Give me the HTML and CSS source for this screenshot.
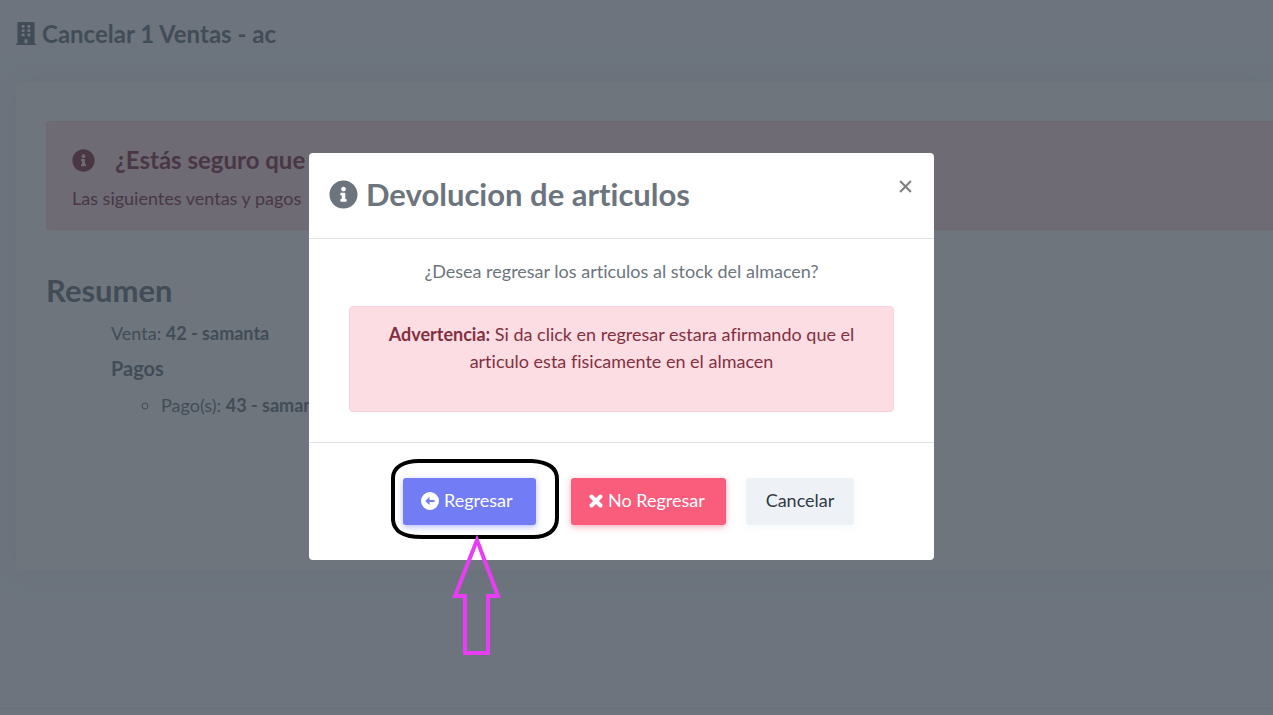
FILE: index.html
```html
<!DOCTYPE html>
<html lang="es">
<head>
<meta charset="utf-8">
<meta name="viewport" content="width=device-width, initial-scale=1">
<title>Cancelar Ventas</title>
<link rel="stylesheet" href="styles.css">
</head>
<body>
<svg class="sprite" aria-hidden="true">
  <symbol id="info" viewBox="0 0 512 512"><path d="M256 8C119 8 8 119 8 256s111 248 248 248 248-111 248-248S393 8 256 8zm0 110c23 0 42 19 42 42s-19 42-42 42-42-19-42-42 19-42 42-42zm56 254c0 7-5 12-12 12h-88c-7 0-12-5-12-12v-24c0-7 5-12 12-12h12v-64h-12c-7 0-12-5-12-12v-24c0-7 5-12 12-12h64c7 0 12 5 12 12v100h12c7 0 12 5 12 12v24z"/></symbol>
</svg>
<div class="page">
  <header class="page-head">
    <svg class="icon-building" viewBox="0 0 448 512" aria-hidden="true"><path fill-rule="evenodd" d="M436 480h-20V24c0-13-11-24-24-24H56C43 0 32 11 32 24v456H12c-7 0-12 5-12 12v20h448v-20c0-7-5-12-12-12zM128 76c0-7 5-12 12-12h40c7 0 12 5 12 12v40c0 7-5 12-12 12h-40c-7 0-12-5-12-12V76zm0 96c0-7 5-12 12-12h40c7 0 12 5 12 12v40c0 7-5 12-12 12h-40c-7 0-12-5-12-12v-40zm52 148h-40c-7 0-12-5-12-12v-40c0-7 5-12 12-12h40c7 0 12 5 12 12v40c0 7-5 12-12 12zm76 160h-64v-84c0-7 5-12 12-12h40c7 0 12 5 12 12v84zm64-172c0 7-5 12-12 12h-40c-7 0-12-5-12-12v-40c0-7 5-12 12-12h40c7 0 12 5 12 12v40zm0-96c0 7-5 12-12 12h-40c-7 0-12-5-12-12v-40c0-7 5-12 12-12h40c7 0 12 5 12 12v40zm0-96c0 7-5 12-12 12h-40c-7 0-12-5-12-12V76c0-7 5-12 12-12h40c7 0 12 5 12 12v40z"/></svg>
    <h1 class="page-title">Cancelar 1 Ventas - ac</h1>
  </header>
  <main class="card">
    <section class="notice">
      <h2 class="notice-title"><svg class="icon-notice" aria-hidden="true"><use href="#info"/></svg>¿Estás seguro que</h2>
      <p class="notice-text">Las siguientes ventas y pagos</p>
    </section>
    <h2 class="summary-title">Resumen</h2>
    <div class="summary">
      <p class="line">Venta: <strong>42 - samanta</strong></p>
      <h3 class="pay-title">Pagos</h3>
      <ul class="pay-list"><li>Pago(s): <strong>43 - samanta</strong></li></ul>
    </div>
  </main>
  <footer class="page-foot"></footer>
</div>
<div class="backdrop">
  <div class="modal" role="dialog" aria-modal="true" aria-labelledby="dialog-title">
    <div class="modal-head">
      <h2 class="modal-title" id="dialog-title"><svg class="icon-title" aria-hidden="true"><use href="#info"/></svg>Devolucion de articulos</h2>
      <button class="close" type="button" aria-label="Cerrar"><svg class="icon-close" viewBox="0 0 12 12" aria-hidden="true"><path d="M1 1l10 10M11 1L1 11"/></svg></button>
    </div>
    <div class="modal-body">
      <p class="question">¿Desea regresar los articulos al stock del almacen?</p>
      <div class="warning"><strong>Advertencia:</strong> Si da click en regresar estara afirmando que el articulo esta fisicamente en el almacen</div>
    </div>
    <div class="modal-foot">
      <div class="marked">
        <button class="btn btn-primary" type="button"><svg class="icon-back" viewBox="0 0 18 18" aria-hidden="true"><circle cx="9" cy="9" r="9" fill="#fff"/><path d="M8.500 4.800L4.300 9l4.200 4.200V10H13.500V8H8.500z" fill="#727cf5"/></svg>Regresar</button>
        <svg class="mark" viewBox="0 0 170 200" aria-hidden="true">
          <path d="M29 3H142C157 4 167 9 167 21V60C167 73 157 79 143 79H32C12 79 4 73 3 62V20C3 9 14 3 29 3Z" fill="none" stroke="#000" stroke-width="4"/>
          <path d="M87 82L65 138H75V195H98V138H108Z" fill="none" stroke="#e93df5" stroke-width="4"/>
        </svg>
      </div>
      <button class="btn btn-danger" type="button"><svg class="icon-times" viewBox="0 0 14 14" aria-hidden="true"><path d="M2.500 2.500l9 9M11.500 2.500l-9 9"/></svg>No Regresar</button>
      <button class="btn btn-light" type="button">Cancelar</button>
    </div>
  </div>
</div>
</body>
</html>
```

FILE: styles.css
```css
* { box-sizing: border-box; }
body {
  margin: 0;
  background: #fafbfe;
  color: #6c757d;
  font: 18px/27px Lato, "Open Sans", sans-serif;
  font-variant-ligatures: none;
}
h1, h2, h3, p, ul { margin: 0; }
svg { flex: none; fill: currentColor; }
.sprite { position: absolute; width: 0; height: 0; }

.page { display: flex; flex-direction: column; min-height: 100vh; overflow: hidden; }
.page-head { display: flex; align-items: center; gap: 6px; height: 82px; padding: 0 16px 15px; }
.icon-building { width: 20px; height: 23px; }
.page-title { font-size: 24px; line-height: 32px; }
.card {
  margin-left: 16px;
  padding: 39px 0 151px 30px;
  background: #fff;
  border-radius: 4px 0 0 4px;
  box-shadow: 0 0 35px rgba(154, 161, 171, 0.15);
}
.notice {
  padding: 23px 25px 17px;
  border: 1px solid #fccfda;
  border-right: 0;
  border-radius: 4px 0 0 4px;
  background: #fddde4;
  color: #823040;
}
.notice-title { display: flex; align-items: center; gap: 20px; margin-bottom: 10px; font-size: 24px; line-height: 30px; }
.icon-notice { width: 23px; height: 23px; }
.summary-title { margin: 42px 0 12px; font-size: 31px; line-height: 36px; }
.summary { padding-left: 65px; }
.pay-title { margin: 8px 0 10px; font-size: 20px; line-height: 27px; }
.pay-list { padding-left: 50px; list-style: circle; }
.page-foot { height: 7px; margin-top: auto; border-top: 1px solid #e6e9ee; }

.backdrop {
  position: fixed;
  inset: 0;
  display: flex;
  align-items: flex-start;
  justify-content: center;
  padding: 153px 30px 0 0;
  background: rgba(49, 58, 70, 0.7);
}
.modal { width: 100%; max-width: 625px; border-radius: 4px; background: #fff; }
.modal-head {
  display: flex;
  align-items: flex-start;
  justify-content: space-between;
  padding: 19px 20px 22px;
  border-bottom: 1px solid #dee2e6;
}
.modal-title { display: flex; align-items: center; gap: 8px; font-size: 31px; line-height: 44px; }
.icon-title { width: 29px; height: 29px; }
.close { display: flex; padding: 8px 2px; border: 0; background: none; color: #808080; }
.icon-close { width: 13px; height: 13px; fill: none; stroke: currentColor; stroke-width: 2; }
.modal-body { padding: 19px 40px 30px; text-align: center; }
.question { margin-bottom: 21px; }
.warning {
  padding: 14px 25px 36px;
  border: 1px solid #fccfda;
  border-radius: 4px;
  background: #fddde4;
  color: #823040;
}
.modal-foot {
  display: flex;
  justify-content: center;
  padding: 35px 0 35px 14px;
  border-top: 1px solid #dee2e6;
}
.marked { position: relative; margin-right: 35px; }
.mark { position: absolute; top: -20px; left: -13px; width: 170px; height: 200px; pointer-events: none; }
.btn {
  display: flex;
  align-items: center;
  gap: 5px;
  height: 47px;
  padding: 0 18px 2px;
  border: 0;
  border-radius: 3px;
  color: #fff;
  font: inherit;
}
.btn-primary { min-width: 133px; background: #727cf5; box-shadow: 0 2px 6px rgba(114, 124, 245, 0.5); }
.btn-danger { min-width: 155px; margin-right: 20px; background: #fa5c7c; box-shadow: 0 2px 6px rgba(250, 92, 124, 0.5); }
.btn-light { min-width: 108px; justify-content: center; background: #eef2f7; color: #313a46; box-shadow: 0 2px 6px rgba(238, 242, 247, 0.5); }
.icon-back { width: 18px; height: 18px; }
.icon-times { width: 14px; height: 14px; fill: none; stroke: currentColor; stroke-width: 4; stroke-linecap: round; }
```
